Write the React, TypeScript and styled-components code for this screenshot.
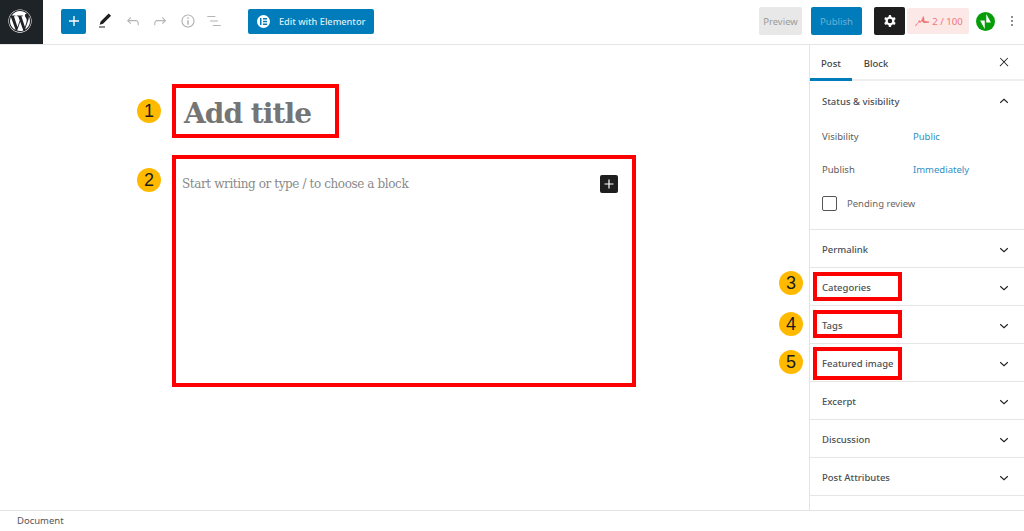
import React from "react";
import styled, { createGlobalStyle } from "styled-components";
import { FaWordpress } from "react-icons/fa";

const Global = createGlobalStyle`
  html, body { margin: 0; padding: 0; background: #fff; }
  body { font-family: "Noto Sans", "Open Sans", sans-serif; overflow: hidden; }
  * { box-sizing: border-box; }
`;

const Page = styled.div`
  width: 1024px; height: 531px; display: flex; flex-direction: column; overflow: hidden; background: #fff;
`;
const Header = styled.header`
  height: 45px; flex: none; display: flex; align-items: center; border-bottom: 1px solid #e6e6e6; padding: 0 4px 2px 0;
`;
const Logo = styled.div`
  width: 43px; height: 44px; align-self: flex-start; background: #1e2327; color: #fff; display: flex; align-items: center; justify-content: center; flex: none; font-size: 24px; padding: 0 3px 2px 0;
`;
const AddButton = styled.div`
  width: 25px; height: 25px; margin-left: 18px; border-radius: 2px; background: #007cba; color: #fff; display: flex; align-items: center; justify-content: center;
`;
const ToolIcon = styled.svg<{ $muted?: boolean; $left: number }>`
  width: 18px; height: 18px; flex: none; margin-left: ${(p) => p.$left}px; fill: ${(p) => (p.$muted ? "#b4b4b4" : "#1e1e1e")};
`;
const ElementorButton = styled.div`
  width: 126px; height: 25px; margin-left: 25px; border-radius: 2px; background: #007cba; color: #dfeef6; font-size: 9.2px; font-weight: 500; display: flex; align-items: center; padding-left: 9px; gap: 9px;
`;
const ElementorMark = styled.span`
  width: 13px; height: 13px; border-radius: 50%; background: #fff; display: flex; align-items: center; justify-content: center; gap: 1px; color: #007cba;
`;
const Spacer = styled.div` flex: 1; `;
const PreviewButton = styled.div`
  width: 43px; height: 28px; background: #e8e8e8; color: #9b9b9b; border-radius: 2px; font-size: 9.5px; display: flex; align-items: center; justify-content: center;
`;
const PublishButton = styled.div`
  width: 51px; height: 28px; margin-left: 9px; background: #007cba; color: #6fb0d6; border-radius: 2px; font-size: 9.5px; display: flex; align-items: center; justify-content: center;
`;
const GearButton = styled.div`
  width: 31px; height: 28px; margin-left: 12px; background: #1e1e1e; color: #fff; border-radius: 2px; display: flex; align-items: center; justify-content: center;
`;
const Score = styled.div`
  width: 62px; height: 26px; margin-left: 2px; background: #fde8e8; color: #f07676; border-radius: 2px; font-size: 9.6px; display: flex; align-items: center; justify-content: center; gap: 3px; padding-left: 2px;
`;
const Jetpack = styled.svg`
  width: 19px; height: 19px; margin-left: 7px; flex: none;
`;
const Kebab = styled.svg`
  width: 16px; height: 16px; margin-left: 9px; fill: #1e1e1e; flex: none;
`;

const Body = styled.div` flex: 1; display: flex; min-height: 0; `;
const Canvas = styled.main`
  flex: 1; padding: 39px 0 0 137px; display: flex; flex-direction: column; gap: 17px;
`;
const CanvasRow = styled.div<{ $badgeTop: number }>`
  display: flex; align-items: flex-start; gap: 11px;
  & > :first-child { margin-top: ${(p) => p.$badgeTop}px; }
`;
const Badge = styled.div`
  width: 24px; height: 24px; border-radius: 50%; background: #ffba00; color: #1a1a1a; font-family: "Liberation Sans", Arial, sans-serif; font-size: 18px; display: flex; align-items: center; justify-content: center; flex: none;
`;
const TitleBox = styled.div`
  width: 167px; height: 54px; border: 4px solid #ff0000; padding: 5px 0 0 8px; display: flex; align-items: center;
  font-family: "DejaVu Serif", serif; font-weight: 700; font-size: 28px; letter-spacing: -0.95px; color: #757575; white-space: nowrap;
`;
const ContentBox = styled.div`
  width: 464px; height: 232px; border: 4px solid #ff0000; padding: 17px 14px 0 6px; display: flex; align-items: flex-start; justify-content: space-between;
`;
const Placeholder = styled.div`
  font-family: "DejaVu Serif", serif; font-size: 12px; letter-spacing: -0.4px; line-height: 16px; color: #8a8a8a; white-space: nowrap;
`;
const BlockAdd = styled.div`
  width: 18px; height: 18px; margin-top: -1px; background: #1e1e1e; border-radius: 2px; color: #fff; display: flex; align-items: center; justify-content: center;
`;

const Sidebar = styled.aside`
  width: 215px; flex: none; border-left: 1px solid #e4e4e4; display: flex; flex-direction: column;
`;
const Tabs = styled.div`
  height: 36px; flex: none; display: flex; align-items: stretch; border-bottom: 2px solid #eeeeee; position: relative; font-size: 9.5px; font-weight: 500; color: #444;
`;
const Tab = styled.div<{ $active?: boolean }>`
  width: ${(p) => (p.$active ? 42 : 48)}px; display: flex; align-items: center; justify-content: center; padding-top: 3px; margin-bottom: -2px;
  border-bottom: 3px solid ${(p) => (p.$active ? "#007cba" : "transparent")};
`;
const Close = styled.svg`
  width: 14px; height: 14px; position: absolute; right: 13px; top: 10px; fill: #1e1e1e;
`;
const Panel = styled.section<{ $h: number }>`
  height: ${(p) => p.$h}px; flex: none; border-bottom: 1px solid #e6e6e6; position: relative;
`;
const PanelHead = styled.div<{ $h: number }>`
  height: ${(p) => p.$h}px; padding: 2px 13px 0 12px; display: flex; align-items: center; justify-content: space-between; font-size: 9.5px; font-weight: 500; color: #4a4f55;
`;
const Chevron = styled.svg`
  width: 14px; height: 14px; fill: none; stroke: #1e1e1e; stroke-width: 1.8;
`;
const InfoRow = styled.div<{ $h: number }>`
  height: ${(p) => p.$h}px; display: flex; align-items: center; padding-left: 12px; font-size: 9.5px; color: #5c5c5c;
`;
const InfoLabel = styled.span` width: 91px; `;
const LinkValue = styled.span` color: #2f8fc4; `;
const CheckRow = styled.div`
  display: flex; align-items: center; gap: 10px; padding: 10px 0 0 12px; font-size: 9.5px; color: #666;
`;
const Checkbox = styled.span`
  width: 15px; height: 15px; border: 1px solid #555; border-radius: 2px; flex: none;
`;
const Mark = styled.div<{ $top: number; $h: number }>`
  position: absolute; left: 3px; top: ${(p) => p.$top}px; width: 89px; height: ${(p) => p.$h}px; border: 4px solid #ff0000; pointer-events: none;
`;
const SideBadge = styled(Badge)<{ $top: number }>`
  position: absolute; left: -31px; top: ${(p) => p.$top}px; z-index: 2;
`;
const Footer = styled.footer`
  height: 21px; flex: none; border-top: 1px solid #e4e4e4; padding: 3px 0 0 17px; font-size: 9.5px; line-height: 14px; color: #555;
`;

const Plus = ({ size }: { size: number }) => (
  <svg width={size} height={size} viewBox="0 0 24 24" fill="currentColor"><path d="M18 11.2h-5.2V6h-1.6v5.2H6v1.6h5.2V18h1.6v-5.2H18z" /></svg>
);

const Cog = () => (
  <svg width="18" height="18" viewBox="0 0 24 24" fill="currentColor"><path fillRule="evenodd" clipRule="evenodd" d="M10.289 4.836A1 1 0 0111.275 4h1.306a1 1 0 01.987.836l.244 1.466c.787.26 1.503.679 2.108 1.218l1.393-.522a1 1 0 011.216.437l.653 1.13a1 1 0 01-.23 1.273l-1.148.944a6.025 6.025 0 010 2.435l1.149.946a1 1 0 01.23 1.272l-.653 1.13a1 1 0 01-1.216.437l-1.394-.522c-.605.54-1.32.958-2.108 1.218l-.244 1.466a1 1 0 01-.987.836h-1.306a1 1 0 01-.986-.836l-.244-1.466a5.995 5.995 0 01-2.108-1.218l-1.394.522a1 1 0 01-1.217-.436l-.653-1.131a1 1 0 01.23-1.272l1.149-.946a6.026 6.026 0 010-2.435l-1.148-.944a1 1 0 01-.23-1.272l.653-1.131a1 1 0 011.217-.437l1.393.522a5.994 5.994 0 012.108-1.218l.244-1.466zM14.929 12a3 3 0 11-6 0 3 3 0 016 0z" /></svg>
);

const Down = () => <Chevron viewBox="0 0 24 24"><path d="M5.500 9l6.500 6 6.500-6" /></Chevron>;
const Up = () => <Chevron viewBox="0 0 24 24"><path d="M5.500 15l6.500-6 6.500 6" /></Chevron>;

export default function App() {
  return (
    <Page>
      <Global />
      <Header>
        <Logo><FaWordpress /></Logo>
        <AddButton><Plus size={20} /></AddButton>
        <ToolIcon $left={10} viewBox="0 0 24 24"><path d="M20.100 5.100L16.900 2 6.200 12.700l-1.300 4.400 4.500-1.300L20.100 5.100zM4 20.800h8v-1.500H4v1.500z" /></ToolIcon>
        <ToolIcon $muted $left={10} viewBox="0 0 24 24"><path d="M18.300 11.700c-.6-.6-1.400-.9-2.300-.9H6.700l2.900-3.300-1.100-1-4.500 5L8.500 16l1-1-2.700-2.700H16c.5 0 .9.2 1.300.5 1 1 1 3.400 1 4.500v.3h1.500v-.2c0-1.500 0-4.300-1.500-5.700z" /></ToolIcon>
        <ToolIcon $muted $left={9} viewBox="0 0 24 24"><path d="M15.600 6.500l-1.100 1 2.900 3.300H8c-.9 0-1.700.3-2.300.9-1.400 1.500-1.400 4.200-1.400 5.600v.2h1.500v-.3c0-1.100 0-3.500 1-4.500.3-.3.7-.5 1.300-.5h9.200L14.500 15l1.100 1.100 4.600-4.600-4.600-5z" /></ToolIcon>
        <ToolIcon $muted $left={10} viewBox="0 0 24 24"><path d="M12 3.200c-4.800 0-8.800 3.900-8.800 8.800 0 4.800 3.900 8.800 8.800 8.800 4.800 0 8.800-3.900 8.800-8.800 0-4.800-4-8.800-8.800-8.800zm0 16c-4 0-7.200-3.300-7.200-7.200C4.800 8 8 4.800 12 4.800s7.200 3.300 7.200 7.200c0 4-3.200 7.200-7.200 7.200zM11 17h2v-6h-2v6zm0-8h2V7h-2v2z" /></ToolIcon>
        <ToolIcon $muted $left={8} viewBox="0 0 24 24"><path d="M13.800 5.200H3v1.500h10.800V5.200zm-3.600 12v1.500H21v-1.500H10.200zm7.200-6H6.600v1.500h10.800v-1.500z" /></ToolIcon>
        <ElementorButton>
          <ElementorMark>
            <svg width="7" height="7" viewBox="0 0 7 7" fill="currentColor"><path d="M0 0h1.500v7H0zM3 0h4v1.500H3zM3 2.750h4v1.500H3zM3 5.500h4V7H3z" /></svg>
          </ElementorMark>
          Edit with Elementor
        </ElementorButton>
        <Spacer />
        <PreviewButton>Preview</PreviewButton>
        <PublishButton>Publish</PublishButton>
        <GearButton><Cog /></GearButton>
        <Score>
          <svg width="14" height="10" viewBox="0 0 14 10" fill="currentColor"><path d="M0 9.500l3-3 1-2.500 1.500 1.500L7.500 2 8 0l1 1 .5 4L14 5.500v1.200L8.500 7 7 5 5 7 4 6 1 10z" /></svg>
          2 / 100
        </Score>
        <Jetpack viewBox="0 0 20 20"><circle cx="10" cy="10" r="10" fill="#069e08" /><path fill="#fff" d="M10.800 2v9h4.900zM9.200 18V9H4.300z" /></Jetpack>
        <Kebab viewBox="0 0 24 24"><path d="M13 19h-2v-2h2v2zm0-6h-2v-2h2v2zm0-6h-2V5h2v2z" /></Kebab>
      </Header>
      <Body>
        <Canvas>
          <CanvasRow $badgeTop={15}>
            <Badge>1</Badge>
            <TitleBox>Add title</TitleBox>
          </CanvasRow>
          <CanvasRow $badgeTop={13}>
            <Badge>2</Badge>
            <ContentBox>
              <Placeholder>Start writing or type / to choose a block</Placeholder>
              <BlockAdd><Plus size={18} /></BlockAdd>
            </ContentBox>
          </CanvasRow>
        </Canvas>
        <Sidebar>
          <Tabs>
            <Tab $active>Post</Tab>
            <Tab>Block</Tab>
            <Close viewBox="0 0 24 24"><path d="M13 11.800l6.100-6.300-1-1-6.100 6.200-6.100-6.200-1 1 6.100 6.300-6.500 6.700 1 1 6.500-6.600 6.500 6.600 1-1z" /></Close>
          </Tabs>
          <Panel $h={149}>
            <PanelHead $h={38}>Status &amp; visibility<Up /></PanelHead>
            <InfoRow $h={34}><InfoLabel>Visibility</InfoLabel><LinkValue>Public</LinkValue></InfoRow>
            <InfoRow $h={33}><InfoLabel>Publish</InfoLabel><LinkValue>Immediately</LinkValue></InfoRow>
            <CheckRow><Checkbox />Pending review</CheckRow>
          </Panel>
          <Panel $h={38}><PanelHead $h={37}>Permalink<Down /></PanelHead></Panel>
          <Panel $h={38}>
            <PanelHead $h={37}>Categories<Down /></PanelHead>
            <Mark $top={4} $h={29} />
            <SideBadge $top={3}>3</SideBadge>
          </Panel>
          <Panel $h={38}>
            <PanelHead $h={37}>Tags<Down /></PanelHead>
            <Mark $top={4} $h={28} />
            <SideBadge $top={6}>4</SideBadge>
          </Panel>
          <Panel $h={38}>
            <PanelHead $h={37}>Featured image<Down /></PanelHead>
            <Mark $top={3} $h={33} />
            <SideBadge $top={6}>5</SideBadge>
          </Panel>
          <Panel $h={38}><PanelHead $h={37}>Excerpt<Down /></PanelHead></Panel>
          <Panel $h={38}><PanelHead $h={37}>Discussion<Down /></PanelHead></Panel>
          <Panel $h={38}><PanelHead $h={37}>Post Attributes<Down /></PanelHead></Panel>
        </Sidebar>
      </Body>
      <Footer>Document</Footer>
    </Page>
  );
}
